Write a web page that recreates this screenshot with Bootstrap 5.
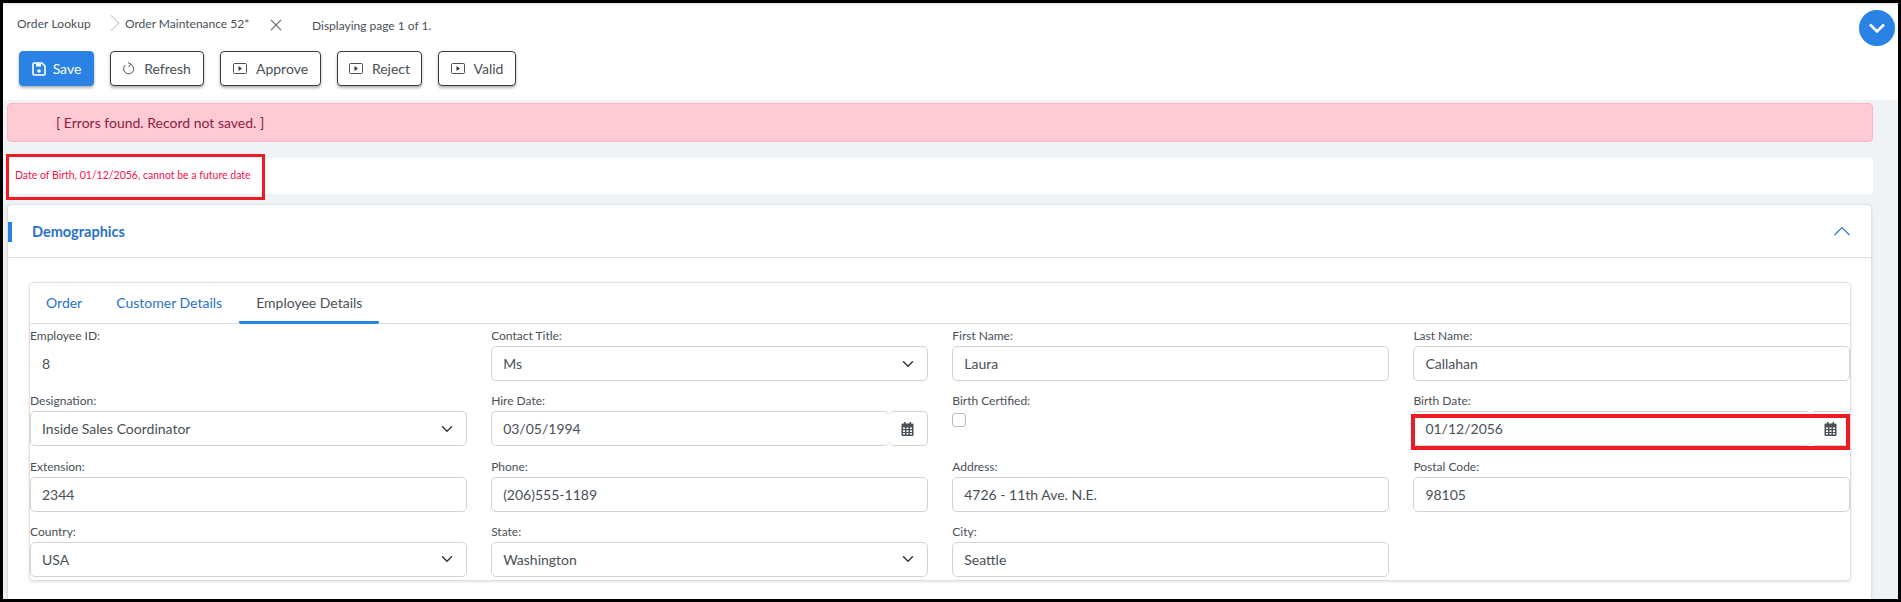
<!DOCTYPE html>
<html lang="en">
<head>
<meta charset="utf-8">
<title>Order Maintenance</title>
<link href="https://cdn.jsdelivr.net/npm/bootstrap@5.3.0/dist/css/bootstrap.min.css" rel="stylesheet">
<style>
html,body{height:100%;overflow:hidden}
body{background:#000;padding:3px;font-family:Lato,"Noto Sans",sans-serif;color:#495057;font-size:14px}
.frame{height:596px;overflow:hidden;background:#eff3f6}
.topbar{height:97px;background:#fff;position:relative;box-shadow:inset 0 3px 3px -2px #ddd}
.crumbs{height:48px;padding-left:14px;font-size:12px;color:#495057}
.crumb-a{width:91px;margin-top:-7px;letter-spacing:.1px}
.crumb-b{width:127px;margin-top:-7px;margin-left:3px}
.crumb-chev{margin-top:-8px;width:14px}
.crumb-x{margin:-4px 30px 0 18px}
.crumb-c{margin-top:-3px}
.toolrow{padding-left:16px;gap:16px}
.tb{height:35px;font-size:14px;color:#495057;background:#fff;border:1px solid #343a40;border-radius:4px;box-shadow:0 2px 3px rgba(0,0,0,.3);padding:0;display:inline-flex;align-items:center;justify-content:center;gap:9px}
.tb-save{background:#2a82e4;border-color:#2a82e4;color:#fff;width:75px;gap:7px}
.tb-w94{width:94px}.tb-w101{width:101px}.tb-w85{width:85px}.tb-w78{width:78px}
.collapser{position:absolute;right:3px;top:7px;width:36px;height:36px;border-radius:50%;background:#2a82e4;display:flex;align-items:center;justify-content:center}
.err-alert{margin:3px 25px 0 4px;height:39px;background:#ffc9d5;border:1px solid #ffb3c1;border-radius:4px;color:#8c1c3c;padding:0 0 0 48px;font-size:14px;display:flex;align-items:center}
.err-list{position:relative;margin:16px 25px 0 4px;height:36px;background:#fff;color:#f5114f;font-size:10.500px;padding-left:8px;display:flex;align-items:center}
.redbox{position:absolute;border:3px solid #ed1c24;pointer-events:none}
.box-a{left:-1px;top:-4px;width:259px;height:46px}
.sect{margin:10px 26px 0 4px;background:#fff;border:1px solid #dde1e5;border-radius:4px;box-shadow:0 1px 3px rgba(0,0,0,.1);height:400px}
.sect-head{height:53px;border-bottom:1px solid #dde1e5;position:relative;padding:0 21px 0 24px}
.sect-head::before{content:"";position:absolute;left:0;top:17px;width:4px;height:20px;background:#2a82e4}
.sect-title{color:#2a72c8;font-weight:700;font-size:14.500px;margin-top:2px}
.tabcard{margin:24px 20px 0 21px;border:1px solid #dde1e5;border-radius:4px;box-shadow:0 1px 3px rgba(0,0,0,.12);height:299px}
.tabstrip{height:41px;border-bottom:1px solid #dde1e5;padding-left:0;margin:0}
.tabstrip .nav-link{padding:0 17px;height:41px;line-height:40px;color:#2a72c8;font-size:14px;border:0;background:none;border-radius:0}
.tabstrip .nav-item:first-child .nav-link{padding-left:16px}
.tabstrip .nav-link.active{color:#495057;border-bottom:3px solid #2a82e4;border-radius:2px}
.fields{--bs-gutter-x:24.500px;--bs-gutter-y:11.330px;padding-top:3px}
.fld-label{display:block;font-size:12px;line-height:18px;margin-bottom:1px;color:#495057}
.fields .form-control,.fields .form-select{height:35px;font-size:14px;color:#495057;border-color:#ced4da;padding:0 11px;border-radius:5px}
.fields .form-select{padding-right:36px;background-position:right 11px center}
.fields .input-group>.form-control{border-right:0;border-radius:5px!important}
.fields .input-group-text{background:#fff;border-color:#ced4da;border-left:0;width:39px;padding:0;justify-content:center;border-radius:5px!important;margin-left:0!important}
.static-val{height:35px;line-height:35px;padding-left:12px;font-size:14px}
.fields .chk{width:14px;height:14px;margin:3px 0 0 0;border:1px solid #b5bbc1;border-radius:3px;display:block}
.dategrp{position:relative}
.box-b{left:-1px;top:3px;right:0;height:36px;border-width:4px}
</style>
</head>
<body>
<div class="frame">
  <div class="topbar">
    <div class="crumbs d-flex align-items-center">
      <span class="crumb-a">Order Lookup</span>
      <svg class="crumb-chev" width="10" height="16" viewBox="0 0 10 16"><path d="M1 0.500 9 8 1 15.500" fill="none" stroke="#adb5bd"/></svg>
      <span class="crumb-b">Order Maintenance 52*</span>
      <svg class="crumb-x" width="12" height="12" viewBox="0 0 12 12"><path d="M1 1 11 11M11 1 1 11" stroke="#6c757d" stroke-width="1.100"/></svg>
      <span class="crumb-c">Displaying page 1 of 1.</span>
    </div>
    <div class="toolrow d-flex">
      <button type="button" class="btn tb tb-save"><svg width="14" height="14" viewBox="0 0 14 14"><path d="M2 1h8l3 3v8a1 1 0 0 1-1 1H2a1 1 0 0 1-1-1V2a1 1 0 0 1 1-1z" fill="none" stroke="#fff" stroke-width="1.600"/><rect x="4" y="1.500" width="5" height="3" fill="#fff"/><circle cx="7" cy="9" r="1.800" fill="#fff"/></svg>Save</button>
      <button type="button" class="btn tb tb-w94"><svg width="12" height="13" viewBox="0 0 12 13"><path d="M7.500 2.200A5 5 0 1 1 2.400 3" fill="none" stroke="#495057"/><path d="M5 .5 8 2.300 5.500 4.500" fill="none" stroke="#495057"/></svg>Refresh</button>
      <button type="button" class="btn tb tb-w101"><svg width="14" height="11" viewBox="0 0 14 11"><rect x=".5" y=".5" width="13" height="10" rx="1" fill="none" stroke="#495057"/><path d="M5.500 3v5l3.500-2.500z" fill="#343a40"/></svg>Approve</button>
      <button type="button" class="btn tb tb-w85"><svg width="14" height="11" viewBox="0 0 14 11"><rect x=".5" y=".5" width="13" height="10" rx="1" fill="none" stroke="#495057"/><path d="M5.500 3v5l3.500-2.500z" fill="#343a40"/></svg>Reject</button>
      <button type="button" class="btn tb tb-w78"><svg width="14" height="11" viewBox="0 0 14 11"><rect x=".5" y=".5" width="13" height="10" rx="1" fill="none" stroke="#495057"/><path d="M5.500 3v5l3.500-2.500z" fill="#343a40"/></svg>Valid</button>
    </div>
    <div class="collapser"><svg width="18" height="12" viewBox="0 0 18 12"><path d="M2 2.500 9 9.500 16 2.500" fill="none" stroke="#fff" stroke-width="2.600"/></svg></div>
  </div>
  <div class="err-alert" role="alert">[ Errors found. Record not saved. ]</div>
  <div class="err-list">Date of Birth, 01/12/2056, cannot be a future date<div class="redbox box-a"></div></div>
  <div class="sect">
    <div class="sect-head d-flex align-items-center justify-content-between">
      <span class="sect-title">Demographics</span>
      <svg width="16" height="10" viewBox="0 0 16 10"><path d="M0.500 9 8 1.500 15.500 9" fill="none" stroke="#2a72c8" stroke-width="1.100"/></svg>
    </div>
    <div class="tabcard">
      <ul class="nav tabstrip">
        <li class="nav-item"><a class="nav-link" href="#">Order</a></li>
        <li class="nav-item"><a class="nav-link" href="#">Customer Details</a></li>
        <li class="nav-item"><a class="nav-link active" href="#">Employee Details</a></li>
      </ul>
      <div class="row row-cols-4 fields">
        <div class="col"><label class="fld-label">Employee ID:</label><div class="static-val">8</div></div>
        <div class="col"><label class="fld-label">Contact Title:</label><select class="form-select"><option>Ms</option></select></div>
        <div class="col"><label class="fld-label">First Name:</label><input class="form-control" value="Laura"></div>
        <div class="col"><label class="fld-label">Last Name:</label><input class="form-control" value="Callahan"></div>

        <div class="col"><label class="fld-label">Designation:</label><select class="form-select"><option>Inside Sales Coordinator</option></select></div>
        <div class="col"><label class="fld-label">Hire Date:</label><div class="input-group"><input class="form-control" value="03/05/1994"><span class="input-group-text"><svg width="13" height="14" viewBox="0 0 13 14"><path d="M3 0h1.500v2H3zM8.500 0H10v2H8.500z" fill="#495057"/><path d="M1.500 1.500h10a1 1 0 0 1 1 1V13a1 1 0 0 1-1 1h-10a1 1 0 0 1-1-1V2.500a1 1 0 0 1 1-1zM2 5.500V7h2V5.500zM5.500 5.500V7h2V5.500zM9 5.500V7h2V5.500zM2 8.300V10h2V8.300zM5.500 8.300V10h2V8.300zM9 8.300V10h2V8.300zM2 11v1.500h2V11zM5.500 11v1.500h2V11zM9 11v1.500h2V11z" fill="#495057" fill-rule="evenodd"/></svg></span></div></div>
        <div class="col"><label class="fld-label">Birth Certified:</label><input type="checkbox" class="chk form-check-input"></div>
        <div class="col"><label class="fld-label">Birth Date:</label><div class="input-group dategrp"><input class="form-control" value="01/12/2056"><span class="input-group-text"><svg width="13" height="14" viewBox="0 0 13 14"><path d="M3 0h1.500v2H3zM8.500 0H10v2H8.500z" fill="#495057"/><path d="M1.500 1.500h10a1 1 0 0 1 1 1V13a1 1 0 0 1-1 1h-10a1 1 0 0 1-1-1V2.500a1 1 0 0 1 1-1zM2 5.500V7h2V5.500zM5.500 5.500V7h2V5.500zM9 5.500V7h2V5.500zM2 8.300V10h2V8.300zM5.500 8.300V10h2V8.300zM9 8.300V10h2V8.300zM2 11v1.500h2V11zM5.500 11v1.500h2V11zM9 11v1.500h2V11z" fill="#495057" fill-rule="evenodd"/></svg></span><div class="redbox box-b"></div></div></div>

        <div class="col"><label class="fld-label">Extension:</label><input class="form-control" value="2344"></div>
        <div class="col"><label class="fld-label">Phone:</label><input class="form-control" value="(206)555-1189"></div>
        <div class="col"><label class="fld-label">Address:</label><input class="form-control" value="4726 - 11th Ave. N.E."></div>
        <div class="col"><label class="fld-label">Postal Code:</label><input class="form-control" value="98105"></div>

        <div class="col"><label class="fld-label">Country:</label><select class="form-select"><option>USA</option></select></div>
        <div class="col"><label class="fld-label">State:</label><select class="form-select"><option>Washington</option></select></div>
        <div class="col"><label class="fld-label">City:</label><input class="form-control" value="Seattle"></div>
      </div>
    </div>
  </div>
</div>
<script src="https://cdn.jsdelivr.net/npm/bootstrap@5.3.0/dist/js/bootstrap.bundle.min.js"></script>
</body>
</html>
